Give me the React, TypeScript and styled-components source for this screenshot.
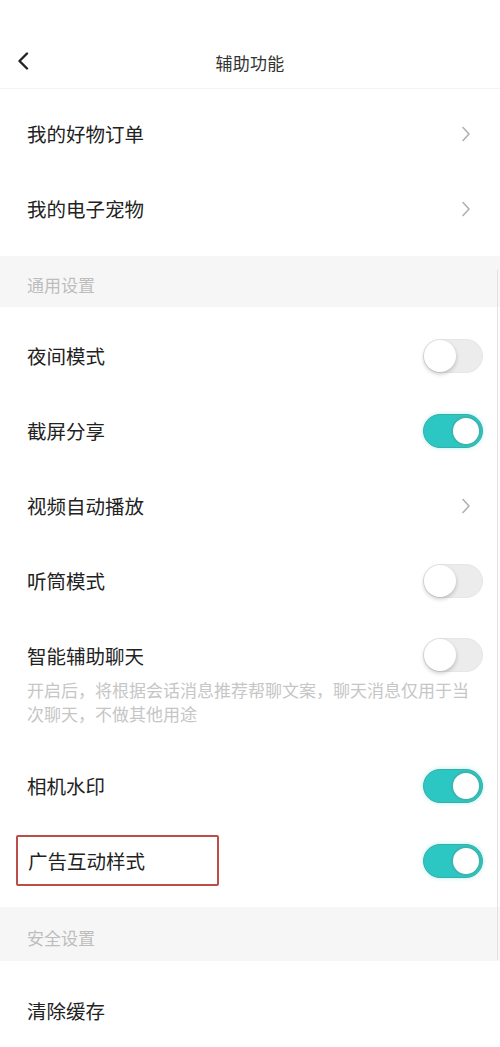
import { FC, ReactNode } from "react";
import styled, { createGlobalStyle } from "styled-components";

const GlobalStyle = createGlobalStyle`
  html, body {
    margin: 0;
    padding: 0;
    background: #ffffff;
  }
  body {
    font-family: "Noto Sans CJK SC", "Noto Sans", sans-serif;
  }
`;

const Page = styled.div`
  position: relative;
  width: 500px;
  height: 1047px;
  overflow: hidden;
  background: #ffffff;
`;

const Header = styled.header`
  display: flex;
  align-items: center;
  justify-content: center;
  position: relative;
  height: 48px;
  margin-top: 41px;
  padding-bottom: 5px;
  border-bottom: 1px solid #f3f3f3;
  box-sizing: border-box;
`;

const BackButton = styled.div`
  position: absolute;
  left: 14px;
  top: 8px;
  width: 18px;
  height: 24px;
  display: flex;
  align-items: center;
  justify-content: center;
`;

const Title = styled.h1`
  margin: 0;
  font-size: 17px;
  font-weight: 400;
  color: #333333;
  letter-spacing: 0.2px;
`;

const Group = styled.section<{ $top: number; $bottom: number }>`
  padding: ${({ $top }) => $top}px 0 ${({ $bottom }) => $bottom}px;
  background: #ffffff;
`;

const SectionHeader = styled.div<{ $height: number }>`
  display: flex;
  align-items: center;
  height: ${({ $height }) => $height}px;
  padding: 6px 27px 0;
  box-sizing: border-box;
  background: #f6f6f6;
  font-size: 17px;
  color: #bdbdbd;
`;

const Row = styled.div`
  display: flex;
  align-items: center;
  justify-content: space-between;
  height: 75px;
  padding: 0 17px 0 27px;
`;

const Label = styled.span`
  font-size: 19.5px;
  color: #222222;
`;

const Highlight = styled.span`
  margin-left: -11px;
  padding: 9px 72px 9px 10px;
  border: 2px solid #bd4d47;
  border-radius: 2px;
`;

const DescItem = styled.div`
  padding: 25px 17px 22px 27px;
`;

const DescTop = styled.div`
  display: flex;
  align-items: center;
  justify-content: space-between;
  height: 24px;
  margin-bottom: 11px;
`;

const Desc = styled.p`
  margin: 0;
  padding-right: 8px;
  font-size: 17px;
  line-height: 24px;
  color: #c6c6c6;
`;

const Chevron = styled.svg`
  width: 10px;
  height: 16px;
  margin-right: 12px;
`;

const Track = styled.div<{ $on: boolean }>`
  position: relative;
  width: 60px;
  height: 34px;
  border-radius: 17px;
  box-sizing: border-box;
  background: ${({ $on }) => ($on ? "#2cc7c2" : "#ececec")};
  border: 1px solid ${({ $on }) => ($on ? "#3aaea9" : "#e6e6e6")};
  box-shadow: ${({ $on }) => ($on ? "0 0 4px rgba(44,199,194,0.35)" : "none")};
`;

const Knob = styled.div<{ $on: boolean }>`
  position: absolute;
  top: ${({ $on }) => ($on ? "1px" : "0px")};
  left: ${({ $on }) => ($on ? "27px" : "0px")};
  width: ${({ $on }) => ($on ? "30px" : "32px")};
  height: ${({ $on }) => ($on ? "30px" : "32px")};
  border-radius: 50%;
  box-sizing: border-box;
  background: #ffffff;
  border: ${({ $on }) => ($on ? "2px solid #3bb5b0" : "none")};
  box-shadow: ${({ $on }) => ($on ? "none" : "0 2px 4px rgba(0,0,0,0.22)")};
`;

const ScrollBar = styled.div`
  position: absolute;
  right: 2px;
  top: 270px;
  width: 1px;
  height: 690px;
  background: #e2e2e2;
`;

const Toggle: FC<{ on: boolean }> = ({ on }) => (
  <Track $on={on}>
    <Knob $on={on} />
  </Track>
);

const Arrow = () => (
  <Chevron viewBox="0 0 10 16">
    <path d="M2 1.5 L8 8 L2 14.5" fill="none" stroke="#b0b0b0" strokeWidth="1.6" strokeLinecap="round" strokeLinejoin="round" />
  </Chevron>
);

const Item: FC<{ children: ReactNode; right: ReactNode }> = ({ children, right }) => (
  <Row>
    <Label>{children}</Label>
    {right}
  </Row>
);

export default function App() {
  return (
    <>
      <GlobalStyle />
      <Page>
        <Header>
          <BackButton>
            <svg width="12" height="18" viewBox="0 0 12 18">
              <path d="M10 1.5 L2.5 9 L10 16.5" fill="none" stroke="#222" strokeWidth="2.4" strokeLinecap="round" strokeLinejoin="round" />
            </svg>
          </BackButton>
          <Title>辅助功能</Title>
        </Header>

        <Group $top={7} $bottom={10}>
          <Item right={<Arrow />}>我的好物订单</Item>
          <Item right={<Arrow />}>我的电子宠物</Item>
        </Group>

        <SectionHeader $height={51}>通用设置</SectionHeader>

        <Group $top={11} $bottom={9}>
          <Item right={<Toggle on={false} />}>夜间模式</Item>
          <Item right={<Toggle on />}>截屏分享</Item>
          <Item right={<Arrow />}>视频自动播放</Item>
          <Item right={<Toggle on={false} />}>听筒模式</Item>
          <DescItem>
            <DescTop>
              <Label>智能辅助聊天</Label>
              <Toggle on={false} />
            </DescTop>
            <Desc>开启后，将根据会话消息推荐帮聊文案，聊天消息仅用于当次聊天，不做其他用途</Desc>
          </DescItem>
          <Item right={<Toggle on />}>相机水印</Item>
          <Item right={<Toggle on />}>
            <Highlight>广告互动样式</Highlight>
          </Item>
        </Group>

        <SectionHeader $height={54}>安全设置</SectionHeader>

        <Group $top={12} $bottom={0}>
          <Item right={null}>清除缓存</Item>
        </Group>

        <ScrollBar />
      </Page>
    </>
  );
}
